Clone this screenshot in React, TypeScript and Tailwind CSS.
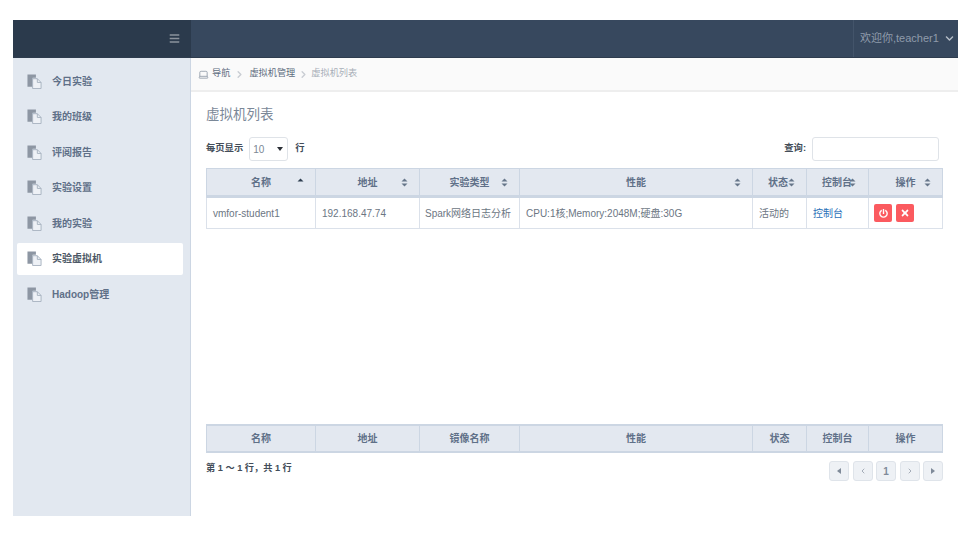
import { ChevronLeft, ChevronRight, Laptop } from "lucide-react";
import { FaBars, FaChevronDown, FaPowerOff, FaTimes } from "react-icons/fa";

const menus = ["今日实验", "我的班级", "评阅报告", "实验设置", "我的实验", "实验虚拟机", "Hadoop管理"];

const headCells = [
  { label: "名称", w: "w-[108px]", sort: "up" },
  { label: "地址", w: "w-[104px]", sort: "both" },
  { label: "实验类型", w: "w-[100px]", sort: "both" },
  { label: "性能", w: "w-[233px]", sort: "both" },
  { label: "状态", w: "w-[54px]", sort: "tight" },
  { label: "控制台", w: "w-[62px]", sort: "tight" },
  { label: "操作", w: "w-[74px]", sort: "both" },
];

const footCells = ["名称", "地址", "镜像名称", "性能", "状态", "控制台", "操作"];

const MenuIcon = () => (
  <svg width="15" height="15" viewBox="0 0 16 16" className="shrink-0">
    <path d="M0.5 0.5h9v3.5H6v9.5H0.5z" fill="#8d96a3" />
    <path d="M6 5h5l4 4v6.5H6z" fill="#eef1f6" stroke="#a8b2c0" strokeWidth="1" />
    <path d="M11 5v4h4" fill="none" stroke="#a8b2c0" strokeWidth="1" />
  </svg>
);

const SortIcon = ({ type }: { type: string }) => (
  <svg width="7" height="9" viewBox="0 0 7 9" className="shrink-0">
    {type !== "down" && <path d="M0.5 3.5L3.5 0.5L6.5 3.5z" fill={type === "up" ? "#2f3e50" : "#67768a"} />}
    {type !== "up" && <path d="M0.5 5.5L3.5 8.5L6.5 5.5z" fill="#67768a" />}
  </svg>
);

const PageBtn = ({ children }: { children: React.ReactNode }) => (
  <div className="w-[20px] h-[20px] flex items-center justify-center rounded-[3px] bg-[#eef1f5] border border-[#dfe4ea] text-[#7f8a99] text-[10px] font-bold">
    {children}
  </div>
);

export default function App() {
  return (
    <div className="w-[977px] h-[533px] bg-white pt-[20px] pl-[13px] text-[10px] font-['Liberation_Sans','Noto_Sans_CJK_SC',sans-serif] overflow-hidden">
      <div className="w-[945px] h-[496px] flex flex-col">
        <div className="h-[38px] flex shrink-0 bg-[#37485e] border-b border-[#2e3c4e]">
          <div className="w-[178px] bg-[#2b3a4c] flex items-center justify-end pr-[11px]">
            <FaBars size={11} className="text-[#8b929c]" />
          </div>
          <div className="flex-1" />
          <div className="w-[105px] border-l border-[#43546a] flex items-center pl-[6px] gap-[6px] text-[11px] text-[#8f9bab] whitespace-nowrap">
            <span>欢迎你,teacher1</span>
            <FaChevronDown size={9} className="text-[#b4bcc7] shrink-0" />
          </div>
        </div>

        <div className="flex flex-1">
          <div className="w-[178px] bg-[#e2e8f0] border-r border-[#ccd6e3] pt-[7px] pl-[4px] pr-[7px]">
            {menus.map((m) => (
              <div
                key={m}
                className={`h-[32px] mb-[3.5px] pl-[10px] flex items-center gap-[10px] rounded-[2px] font-bold ${
                  m === "实验虚拟机" ? "bg-white text-[#4d5866]" : "text-[#5f7088]"
                }`}
              >
                <MenuIcon />
                <span>{m}</span>
              </div>
            ))}
          </div>

          <div className="flex-1 flex flex-col">
            <div className="h-[34px] bg-[#fafafa] border-b-2 border-[#eeeeee] flex items-center pl-[7px] text-[9.2px] text-[#5e6d80]">
              <Laptop size={11} className="text-[#98a2ae] mr-[3px]" />
              <span>导航</span>
              <ChevronRight size={11} strokeWidth={3} className="mx-[4px] text-[#c9cdd3]" />
              <span>虚拟机管理</span>
              <ChevronRight size={11} strokeWidth={3} className="mx-[2.5px] text-[#c9cdd3]" />
              <span className="text-[#a8afb8]">虚拟机列表</span>
            </div>

            <div className="flex-1 pl-[15px] pr-[15px] flex flex-col">
              <div className="pt-[13px] h-[45px] text-[13.5px] text-[#7b8898]">虚拟机列表</div>

              <div className="h-[24px] mb-[7px] flex items-center justify-between font-bold text-[9.3px] text-[#434d59]">
                <div className="flex items-center">
                  <span>每页显示</span>
                  <div className="ml-[6px] w-[39px] h-[24px] border border-[#dfe3e8] rounded-[3px] bg-white flex items-center justify-between pl-[3px] pr-[4px] font-normal text-[10px] text-[#7c8794]">
                    <span>10</span>
                    <span className="w-0 h-0 border-x-[3px] border-x-transparent border-t-[4px] border-t-[#2b2f36]" />
                  </div>
                  <span className="ml-[7px]">行</span>
                </div>
                <div className="flex items-center">
                  <span>查询:</span>
                  <div className="ml-[6px] w-[127px] h-[24px] mr-[4px] border border-[#dfe3e8] rounded-[3px] bg-white" />
                </div>
              </div>

              <div className="h-[61px]">
                <div className="flex h-[30px] bg-[#e3e8f0] border border-[#ccd6e3] border-b-[3px] font-bold text-[#5f7088]">
                  {headCells.map((c, i) => (
                    <div
                      key={c.label}
                      className={`${c.w} ${i ? "border-l border-[#ccd6e3]" : ""} ${c.sort === "tight" ? "pl-[15px] justify-start" : "pr-[11px] justify-end"} flex items-center relative`}
                    >
                      <span className={c.sort === "tight" ? "" : "absolute inset-x-0 text-center"}>{c.label}</span>
                      <span className={c.label === "控制台" ? "ml-[-3px] flex" : "flex"}>
                        <SortIcon type={c.sort === "up" ? "up" : "both"} />
                      </span>
                    </div>
                  ))}
                </div>
                <div className="flex h-[31px] border border-t-0 border-[#dbe1ea] text-[#6c7683] items-center">
                  <div className="w-[108px] h-full pl-[6px] flex items-center">vmfor-student1</div>
                  <div className="w-[104px] h-full pl-[6px] border-l border-[#dbe1ea] flex items-center">192.168.47.74</div>
                  <div className="w-[100px] h-full pl-[5px] border-l border-[#dbe1ea] flex items-center">Spark网络日志分析</div>
                  <div className="w-[233px] h-full pl-[6px] border-l border-[#dbe1ea] flex items-center">CPU:1核;Memory:2048M;硬盘:30G</div>
                  <div className="w-[54px] h-full pl-[6px] border-l border-[#dbe1ea] flex items-center">活动的</div>
                  <div className="w-[62px] h-full pl-[6px] border-l border-[#dbe1ea] flex items-center text-[#2a70b8]">控制台</div>
                  <div className="w-[74px] h-full pl-[5px] border-l border-[#dbe1ea] flex items-center gap-[4px]">
                    <div className="w-[18px] h-[18px] rounded-[2px] bg-[#fb5a5f] flex items-center justify-center">
                      <FaPowerOff size={9} className="text-white" />
                    </div>
                    <div className="w-[18px] h-[18px] rounded-[2px] bg-[#fb5a5f] flex items-center justify-center">
                      <FaTimes size={10} className="text-white" />
                    </div>
                  </div>
                </div>
              </div>

              <div className="h-[195px]" />

              <div className="flex h-[29px] bg-[#e3e8f0] border border-[#ccd6e3] border-t-2 border-b-2 font-bold text-[#5f7088]">
                {footCells.map((c, i) => (
                  <div key={c} className={`${headCells[i].w} ${i ? "border-l border-[#ccd6e3]" : ""} flex items-center justify-center`}>
                    {c}
                  </div>
                ))}
              </div>

              <div className="flex justify-between mt-[8px]">
                <span className="pt-[1px] font-bold text-[9.2px] text-[#434d59] leading-[13px]">第 1 ～ 1 行，共 1 行</span>
                <div className="flex gap-[3.5px]">
                  <PageBtn><span className="w-0 h-0 border-y-[3px] border-y-transparent border-r-[4px] border-r-[#7f8a99]" /></PageBtn>
                  <PageBtn><ChevronLeft size={8} /></PageBtn>
                  <PageBtn>1</PageBtn>
                  <PageBtn><ChevronRight size={8} /></PageBtn>
                  <PageBtn><span className="w-0 h-0 border-y-[3px] border-y-transparent border-l-[4px] border-l-[#7f8a99]" /></PageBtn>
                </div>
              </div>
            </div>
          </div>
        </div>
      </div>
    </div>
  );
}
